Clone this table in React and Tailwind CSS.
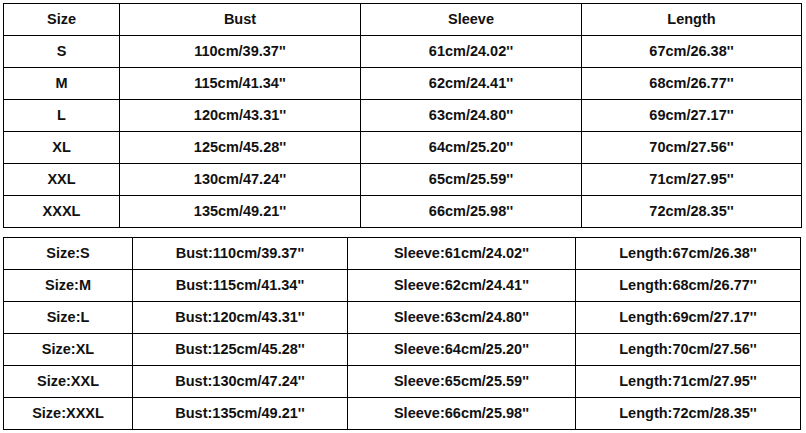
import React from "react";

const rows = [
  ["S", "110cm/39.37''", "61cm/24.02''", "67cm/26.38''"],
  ["M", "115cm/41.34''", "62cm/24.41''", "68cm/26.77''"],
  ["L", "120cm/43.31''", "63cm/24.80''", "69cm/27.17''"],
  ["XL", "125cm/45.28''", "64cm/25.20''", "70cm/27.56''"],
  ["XXL", "130cm/47.24''", "65cm/25.59''", "71cm/27.95''"],
  ["XXXL", "135cm/49.21''", "66cm/25.98''", "72cm/28.35''"],
];

function Cell({ children }) {
  return (
    <div className="bg-white h-[31px] flex items-center justify-center text-[14.5px] font-bold text-[#111]">
      {children}
    </div>
  );
}

export default function App() {
  return (
    <div
      className="w-[806px] h-[433px] bg-white pt-[3px] pl-[3px]"
      style={{ fontFamily: '"Liberation Sans", Arial, sans-serif' }}
    >
      {/* Table 1: header + values */}
      <div className="grid grid-cols-[115px_240px_220px_219px] gap-px bg-black p-px w-fit">
        <Cell>Size</Cell>
        <Cell>Bust</Cell>
        <Cell>Sleeve</Cell>
        <Cell>Length</Cell>
        {rows.map((r) =>
          r.map((v, i) => <Cell key={r[0] + i}>{v}</Cell>)
        )}
      </div>

      {/* Table 2: labelled values */}
      <div className="mt-[9px] grid grid-cols-[128px_214px_227px_224px] gap-px bg-black p-px w-fit">
        {rows.map((r) => (
          <React.Fragment key={r[0]}>
            <Cell>Size:{r[0]}</Cell>
            <Cell>Bust:{r[1]}</Cell>
            <Cell>Sleeve:{r[2]}</Cell>
            <Cell>Length:{r[3]}</Cell>
          </React.Fragment>
        ))}
      </div>
    </div>
  );
}
